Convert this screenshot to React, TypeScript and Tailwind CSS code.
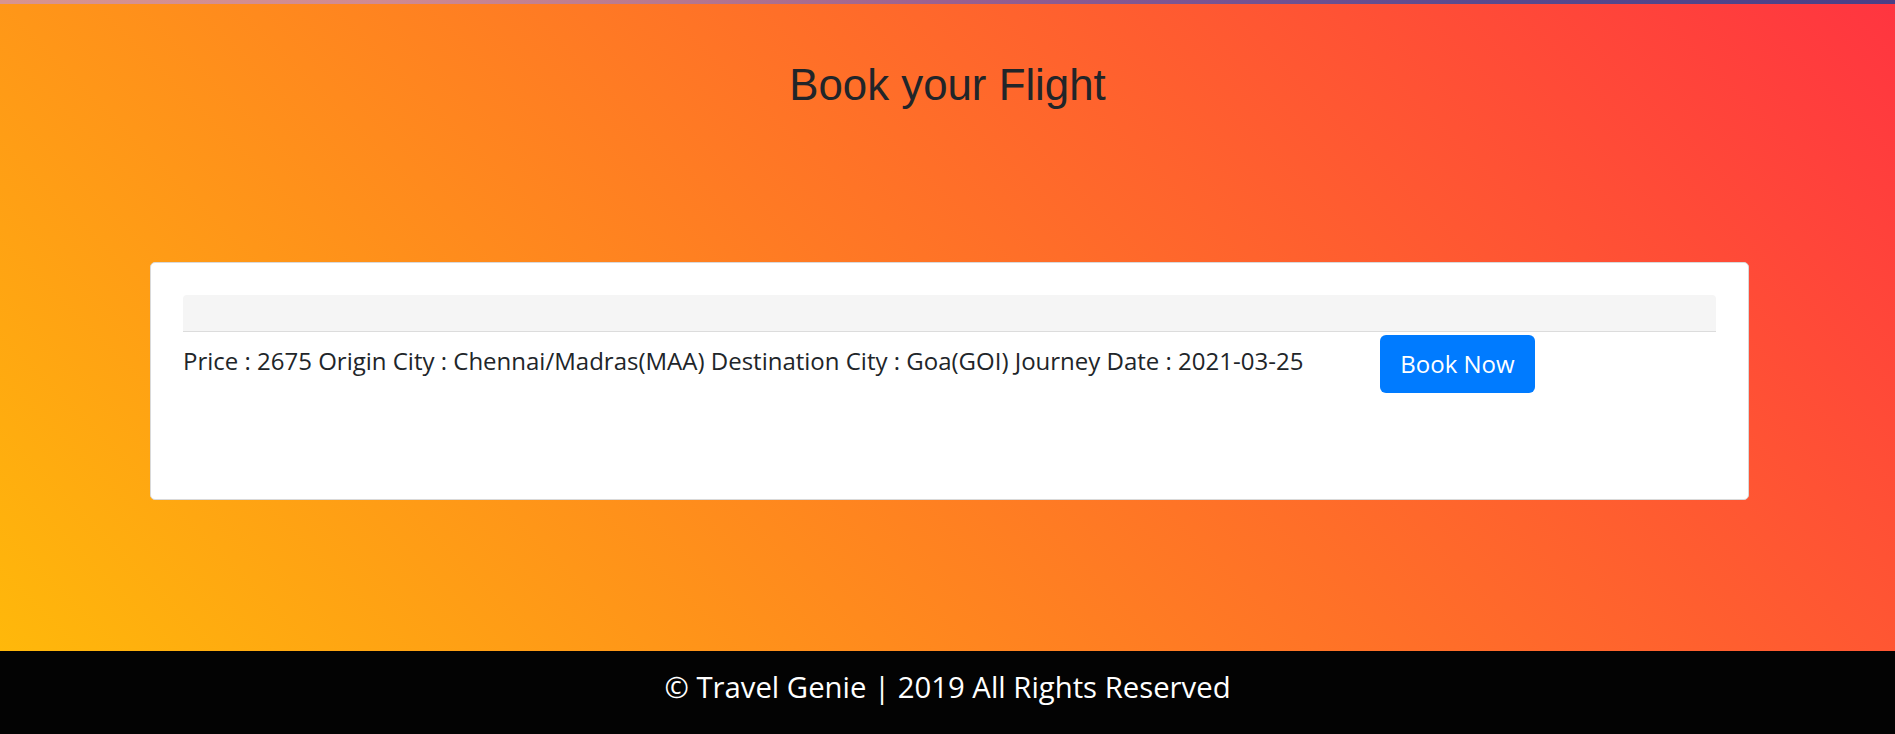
import React from "react";

export default function App() {
  return (
    <div className="w-full flex flex-col">
      <div className="h-[4px] w-full bg-[linear-gradient(90deg,#d8948f_0%,#d08a92_20%,#b8788f_35%,#9a6090_50%,#7d5592_62%,#5a4a8e_78%,#4a3f86_100%)]" />
      <main className="h-[647px] w-full flex flex-col bg-[linear-gradient(45deg,#ffb80a,#ff3540)]">
        <h1 className="mt-[55px] text-center text-[43.8px] leading-[52px] font-normal text-[#212529] font-['Liberation_Sans',Arial,sans-serif]">
          Book your Flight
        </h1>
        <div className="mt-[151px] ml-[150px] w-[1599px] h-[238px] bg-white border border-[#d9d9d9] rounded-[5px] p-[32px] font-['Open_Sans','Noto_Sans',sans-serif] text-[#212529]">
          <div className="h-[37px] w-full bg-[#f5f5f5] border-b border-[#dcdcdc] rounded-t-[4px]" />
          <div className="flex items-start">
            <div className="w-[1197px] pt-[13px] text-[24px] leading-[32px]">
              Price : 2675 Origin City : Chennai/Madras(MAA) Destination City : Goa(GOI) Journey Date : 2021-03-25
            </div>
            <button className="mt-[3px] w-[155px] h-[58px] rounded-[6px] bg-[#007bff] text-white text-[24px] leading-none flex items-center justify-center">
              Book Now
            </button>
          </div>
        </div>
      </main>
      <footer className="h-[83px] w-full bg-[#030303] pt-[15px] text-center text-white text-[29.3px] leading-[42px] font-['Open_Sans','Noto_Sans',sans-serif]">
        © Travel Genie | 2019 All Rights Reserved
      </footer>
    </div>
  );
}
